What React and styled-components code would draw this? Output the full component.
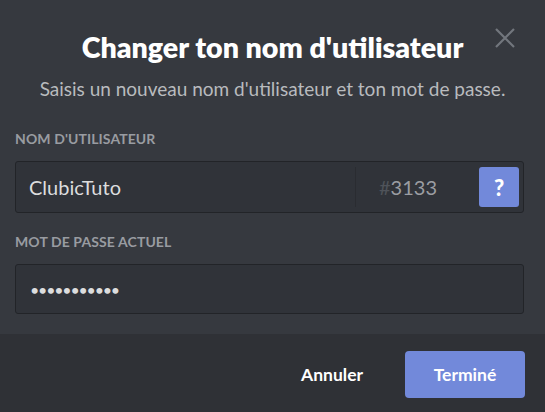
import React from 'react'
import styled, { createGlobalStyle } from 'styled-components';

const GlobalStyle = createGlobalStyle`
  html, body {
    margin: 0;
    padding: 0;
    background: #36393f;
  }
  * { box-sizing: border-box; }
`;

function App() {
  return (
    <>
      <GlobalStyle />
      <Modal>
        <Header>
          <span />
          <TitleBlock>
            <Title>Changer ton nom d'utilisateur</Title>
            <Subtitle>Saisis un nouveau nom d'utilisateur et ton mot de passe.</Subtitle>
          </TitleBlock>
          <CloseButton aria-label="Fermer">
            <svg width="20" height="20" viewBox="0 0 20 20">
              <path d="M1 1 L19 19 M19 1 L1 19" stroke="#72767d" strokeWidth="2.2" fill="none" />
            </svg>
          </CloseButton>
        </Header>

        <Body>
          <Label>Nom d'utilisateur</Label>
          <InputBox>
            <TextInput defaultValue="ClubicTuto" />
            <Separator />
            <Discrim><span>#</span>3133</Discrim>
            <HelpButton>?</HelpButton>
          </InputBox>

          <Label $top={21}>Mot de passe actuel</Label>
          <InputBox $height={50}>
            <PasswordInput type="text" readOnly value={'\u2022'.repeat(11)} />
          </InputBox>
        </Body>

        <Footer>
          <LinkButton>Annuler</LinkButton>
          <PrimaryButton>Terminé</PrimaryButton>
        </Footer>
      </Modal>
    </>
  )
}

const Modal = styled.div`
  width: 545px;
  height: 412px;
  background: #36393f;
  display: flex;
  flex-direction: column;
  font-family: Lato, "Noto Sans", sans-serif;
`;

const Header = styled.div`
  display: grid;
  grid-template-columns: 60px minmax(0, 1fr) 60px;
  padding-top: 29px;
`;

const TitleBlock = styled.div`
  display: flex;
  flex-direction: column;
  align-items: center;
`;

const Title = styled.h2`
  margin: 0;
  font-size: 28.6px;
  line-height: 36px;
  font-weight: 800;
  color: #ffffff;
  white-space: nowrap;
`;

const Subtitle = styled.p`
  margin: 13px 0 0;
  font-size: 19px;
  line-height: 22px;
  color: #b9bbbe;
  white-space: nowrap;
`;

const CloseButton = styled.button`
  justify-self: start;
  align-self: start;
  margin: -1px 0 0 10px;
  width: 20px;
  height: 20px;
  padding: 0;
  border: none;
  background: none;
  display: flex;
`;

const Body = styled.div`
  padding: 0 21px 0 15px;
  display: flex;
  flex-direction: column;
`;

const Label = styled.div`
  margin-top: ${p => p.$top ?? 31}px;
  margin-bottom: 14px;
  font-size: 14px;
  line-height: 16px;
  font-weight: 700;
  text-transform: uppercase;
  color: #999ca1;
  letter-spacing: 0.1px;
`;

const InputBox = styled.div`
  height: ${p => p.$height ?? 52}px;
  background: #303339;
  border: 1px solid #222428;
  border-radius: 3px;
  display: grid;
  grid-template-columns: 1fr auto auto auto;
  align-items: center;
`;

const TextInput = styled.input`
  background: none;
  border: none;
  outline: none;
  padding: 0 13px;
  font-family: Lato, "Noto Sans", sans-serif;
  font-size: 20px;
  color: #dcddde;
  min-width: 0;
`;

const PasswordInput = styled(TextInput)`
  font-size: 16px;
  letter-spacing: -1.2px;
  padding-left: 14px;
  grid-column: 1 / -1;
`;

const Separator = styled.div`
  width: 1px;
  height: 40px;
  background: #2a2c31;
`;

const Discrim = styled.div`
  width: 123px;
  padding-left: 23px;
  font-size: 20px;
  color: #9a9da2;
  span {
    color: #4f535a;
  }
`;

const HelpButton = styled.button`
  width: 40px;
  height: 40px;
  margin-right: 4px;
  border: none;
  border-radius: 3px;
  background: #7289da;
  color: #ffffff;
  font-family: Lato, sans-serif;
  font-weight: 900;
  font-size: 22px;
  padding: 0;
`;

const Footer = styled.div`
  margin-top: 20px;
  flex: 1;
  background: #2f3136;
  display: flex;
  justify-content: flex-end;
  align-items: center;
  padding: 2px 20px 0 0;
`;

const LinkButton = styled.button`
  background: none;
  border: none;
  padding: 0;
  margin-right: 42px;
  font-family: Lato, sans-serif;
  font-size: 17.5px;
  font-weight: 700;
  color: #ffffff;
`;

const PrimaryButton = styled.button`
  width: 120px;
  height: 47px;
  border: none;
  border-radius: 4px;
  background: #7289da;
  font-family: Lato, sans-serif;
  font-size: 17.5px;
  font-weight: 700;
  color: #ffffff;
`;

export default App
